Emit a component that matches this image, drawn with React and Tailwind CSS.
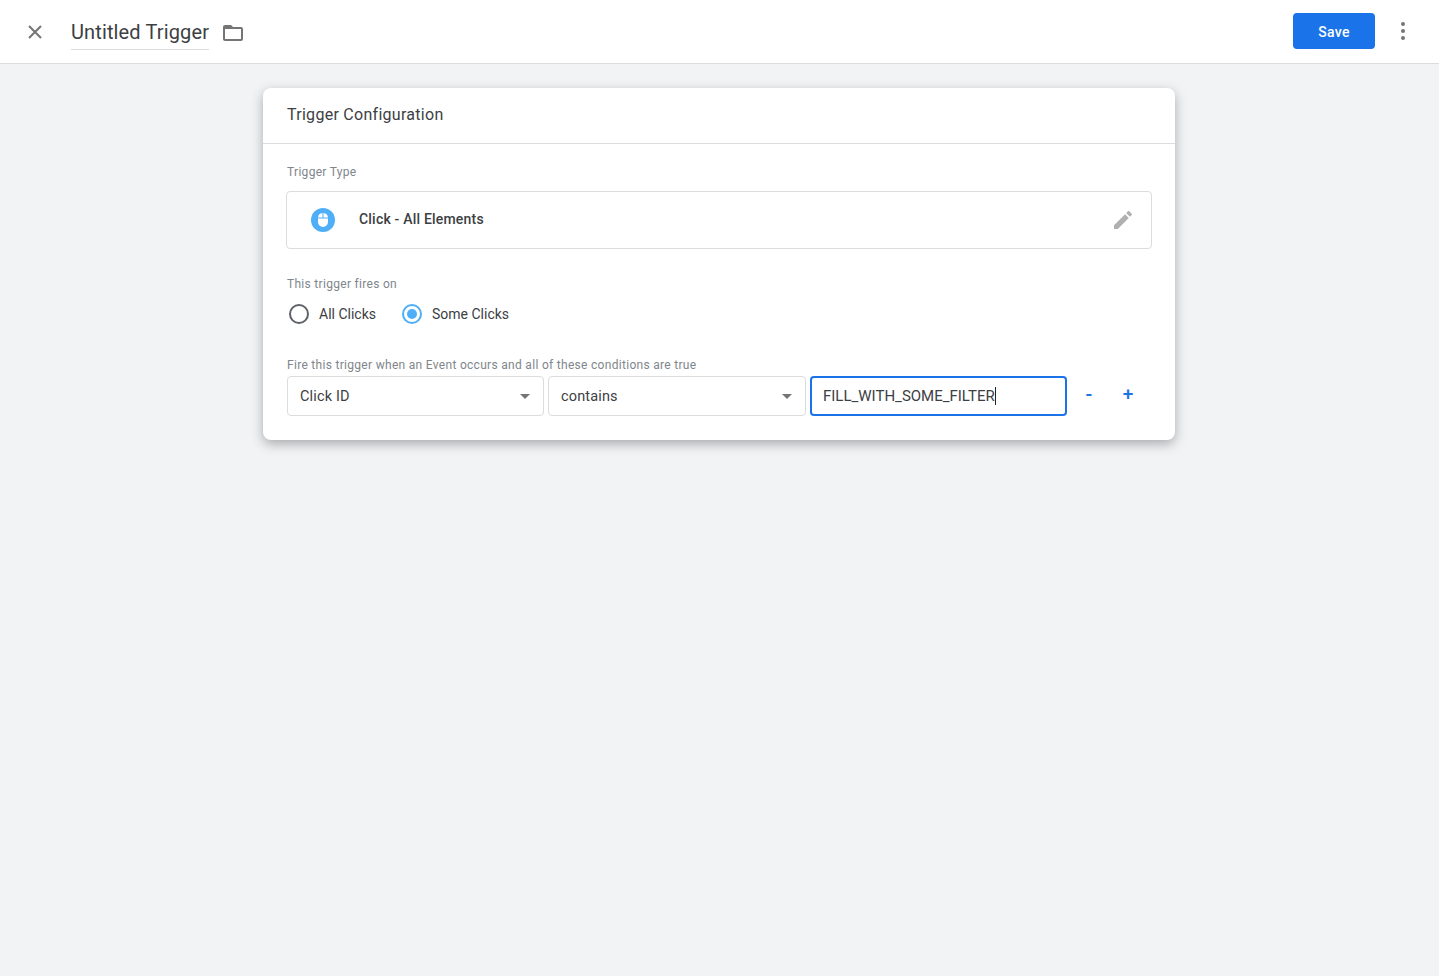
const font = { fontFamily: "Roboto, sans-serif" }

function Radio({ label, checked }) {
  return (
    <div className="flex items-center">
      <span className={`flex h-5 w-5 items-center justify-center rounded-full border-2 ${checked ? "border-[#4eaef8]" : "border-[#5f6368]"}`}>
        {checked && <span className="h-2.5 w-2.5 rounded-full bg-[#4eaef8]" />}
      </span>
      <span className="ml-[10px] text-[14px] leading-5 text-[#3c4043]">{label}</span>
    </div>
  )
}

function Select({ label, width }) {
  return (
    <div className={`flex h-10 items-center justify-between rounded-[4px] border border-[#dadce0] bg-white pl-3 pr-[13px] ${width}`}>
      <span className="pt-[2px] text-[14.5px] tracking-[0.15px] text-[#3c4043]">{label}</span>
      <span className="h-0 w-0 border-x-[5px] border-t-[5px] border-x-transparent border-t-[#757575]" />
    </div>
  )
}

export default function App() {
  return (
    <div style={font} className="flex min-h-[976px] flex-col bg-[#f1f3f4]">
      <header className="flex h-[64px] items-center border-b border-[#dadce0] bg-white pl-[27px] pr-[34px]">
        <svg width="16" height="16" viewBox="0 0 16 16" fill="none" stroke="#757575" strokeWidth="2">
          <path d="M2 2l12 12M14 2L2 14" />
        </svg>
        <div className="ml-[28px] mt-[4px] border-b border-[#dadce0] pb-[3px] text-[20px] leading-[28px] tracking-[0.13px] text-[#3c4043]">Untitled Trigger</div>
        <svg className="ml-[12px] mt-[2px]" width="24" height="24" viewBox="0 0 24 24" fill="#757575">
          <path d="M20 6h-8l-2-2H4c-1.1 0-2 .9-2 2v12c0 1.1.9 2 2 2h16c1.1 0 2-.9 2-2V8c0-1.1-.9-2-2-2zm0 12H4V8h16v10z" />
        </svg>
        <button className="mb-px ml-auto h-9 w-[82px] rounded-[4px] bg-[#1a73e8] pt-[2px] text-[14px] font-medium tracking-[0.25px] text-white">Save</button>
        <span className="mb-px ml-[26px] flex flex-col gap-[3px]">
          <i className="block h-1 w-1 rounded-full bg-[#757575]" />
          <i className="block h-1 w-1 rounded-full bg-[#757575]" />
          <i className="block h-1 w-1 rounded-full bg-[#757575]" />
        </span>
      </header>

      <main className="flex justify-center pr-px pt-[24px]">
        <section className="w-[912px] rounded-[8px] bg-white shadow-[0_4px_12px_rgba(60,64,67,0.4)]">
          <h2 className="flex h-[56px] items-center border-b border-[#dadce0] px-6 pb-[2px] text-[16px] font-normal tracking-[0.28px] text-[#3c4043]">Trigger Configuration</h2>
          <div className="px-6 pb-6 pt-[20px]">
            <p className="text-[12px] leading-4 tracking-[0.3px] text-[#80868b]">Trigger Type</p>
            <div className="-mx-px mt-[11px] flex h-[58px] items-center rounded-[4px] border border-[#dadce0] pl-6 pr-4">
              <span className="flex h-6 w-6 items-center justify-center rounded-full bg-[#4eaef8]">
                <svg width="12" height="16" viewBox="0 0 12 16">
                  <path d="M1 6.5h10V10a5 5 0 0 1-10 0z M1 5.5A5 5 0 0 1 5.5 1v4.5z M6.5 1A5 5 0 0 1 11 5.5H6.5z" fill="#fff" />
                </svg>
              </span>
              <span className="mb-[2px] ml-6 text-[14px] font-medium tracking-[0.2px] text-[#3c4043]">Click - All Elements</span>
              <svg className="ml-auto" width="24" height="24" viewBox="0 0 24 24" fill="#b0b0b0">
                <path d="M3 17.25V21h3.75L17.81 9.94l-3.75-3.75L3 17.25zM20.71 7.04a1 1 0 0 0 0-1.41l-2.34-2.34a1 1 0 0 0-1.41 0l-1.83 1.83 3.75 3.75 1.83-1.83z" />
              </svg>
            </div>

            <p className="mt-[27px] text-[12px] leading-4 tracking-[0.3px] text-[#80868b]">This trigger fires on</p>
            <div className="mt-[12px] flex gap-[26px] pl-[2px]">
              <Radio label="All Clicks" />
              <Radio label="Some Clicks" checked />
            </div>

            <p className="mt-[33px] text-[12px] leading-4 tracking-[0.3px] text-[#80868b]">Fire this trigger when an Event occurs and all of these conditions are true</p>
            <div className="mt-[3px] flex items-center gap-1">
              <Select label="Click ID" width="w-[257px]" />
              <Select label="contains" width="w-[258px]" />
              <div className="flex h-10 w-[257px] items-center rounded-[4px] border-2 border-[#1a73e8] pl-[11px]">
                <span className="border-r border-[#202124] text-[15px] leading-[18px] text-[#3c4043]">FILL_WITH_SOME_FILTER</span>
              </div>
              <span className="mb-1 ml-[10px] w-[16px] text-center text-[20px] font-medium leading-5 text-[#1a73e8]">-</span>
              <span className="mb-1 ml-[19px] w-[16px] text-center text-[19px] font-medium leading-5 text-[#1a73e8]">+</span>
            </div>
          </div>
        </section>
      </main>
    </div>
  )
}
